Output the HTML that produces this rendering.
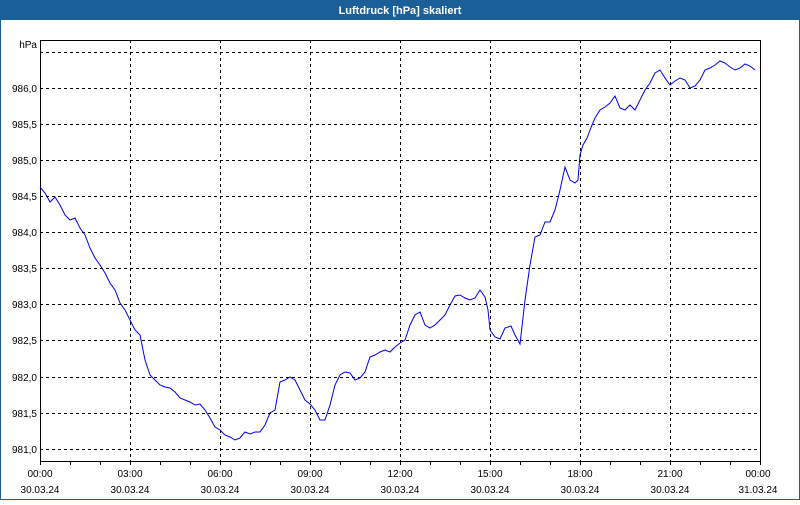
<!DOCTYPE html>
<html><head><style>
body{margin:0;width:800px;height:500px;overflow:hidden;background:#fff;font-family:"Liberation Sans",sans-serif}
</style></head><body>
<svg width="800" height="500" xmlns="http://www.w3.org/2000/svg" font-family="Liberation Sans, sans-serif" font-size="10">
<rect x="0" y="0" width="800" height="20" fill="#1b5f98"/>
<rect x="0.5" y="0.5" width="799" height="499" fill="none" stroke="#1b5f98" stroke-width="1"/>
<rect x="0" y="18" width="1" height="482" fill="#1b5f98"/>
<rect x="799" y="18" width="1" height="482" fill="#1b5f98"/>
<text x="400" y="14" fill="#fff" font-weight="bold" font-size="11" text-anchor="middle">Luftdruck [hPa] skaliert</text>
<g stroke="#000" stroke-width="1" stroke-dasharray="3,3" shape-rendering="crispEdges">
<line x1="40" x2="760" y1="52.5" y2="52.5"/><line x1="40" x2="760" y1="88.5" y2="88.5"/>
<line x1="40" x2="760" y1="124.5" y2="124.5"/><line x1="40" x2="760" y1="160.5" y2="160.5"/>
<line x1="40" x2="760" y1="196.5" y2="196.5"/><line x1="40" x2="760" y1="232.5" y2="232.5"/>
<line x1="40" x2="760" y1="268.5" y2="268.5"/><line x1="40" x2="760" y1="304.5" y2="304.5"/>
<line x1="40" x2="760" y1="340.5" y2="340.5"/><line x1="40" x2="760" y1="377.5" y2="377.5"/>
<line x1="40" x2="760" y1="413.5" y2="413.5"/><line x1="40" x2="760" y1="449.5" y2="449.5"/>
<line y1="40" y2="461" x1="130.5" x2="130.5"/><line y1="40" y2="461" x1="220.5" x2="220.5"/>
<line y1="40" y2="461" x1="310.5" x2="310.5"/><line y1="40" y2="461" x1="400.5" x2="400.5"/>
<line y1="40" y2="461" x1="490.5" x2="490.5"/><line y1="40" y2="461" x1="580.5" x2="580.5"/>
<line y1="40" y2="461" x1="670.5" x2="670.5"/>
</g>
<rect x="40.5" y="40.5" width="720" height="421" fill="none" stroke="#000" shape-rendering="crispEdges"/>
<g stroke="#000" shape-rendering="crispEdges">
<path d="M70.5 461v4M100.5 461v4M130.5 461v4M160.5 461v4M190.5 461v4M220.5 461v4M250.5 461v4M280.5 461v4M310.5 461v4M340.5 461v4M370.5 461v4M400.5 461v4M430.5 461v4M460.5 461v4M490.5 461v4M520.5 461v4M550.5 461v4M580.5 461v4M610.5 461v4M640.5 461v4M670.5 461v4M700.5 461v4M730.5 461v4M40.5 461v4M760.5 461v4"/>
</g>
<g fill="#000" text-anchor="end">
<text x="37" y="48">hPa</text>
<text x="37" y="92">986,0</text><text x="37" y="128">985,5</text><text x="37" y="164">985,0</text>
<text x="37" y="200">984,5</text><text x="37" y="236">984,0</text><text x="37" y="272">983,5</text>
<text x="37" y="308">983,0</text><text x="37" y="344">982,5</text><text x="37" y="381">982,0</text>
<text x="37" y="417">981,5</text><text x="37" y="453">981,0</text>
</g>
<g fill="#000" text-anchor="middle">
<text x="40" y="477">00:00</text><text x="40" y="493">30.03.24</text>
<text x="130" y="477">03:00</text><text x="130" y="493">30.03.24</text>
<text x="220" y="477">06:00</text><text x="220" y="493">30.03.24</text>
<text x="310" y="477">09:00</text><text x="310" y="493">30.03.24</text>
<text x="400" y="477">12:00</text><text x="400" y="493">30.03.24</text>
<text x="490" y="477">15:00</text><text x="490" y="493">30.03.24</text>
<text x="580" y="477">18:00</text><text x="580" y="493">30.03.24</text>
<text x="670" y="477">21:00</text><text x="670" y="493">30.03.24</text>
<text x="758" y="477">00:00</text><text x="758" y="493">31.03.24</text>
</g>
<polyline fill="none" stroke="#0000ee" stroke-width="1" points="40,187 45,193 50,202 55,197 60,205 65,215 70,220 75,218 80,228 85,235 90,248 95,258 100,265 105,273 110,283 115,290 120,303 125,310 130,320 135,330 140,335 145,360 150,375 155,380 160,385 165,387 170,388 175,392 180,398 185,400 190,402 195,405 200,404 205,410 210,418 215,427 220,430 225,435 230,437 235,440 240,438 245,432 250,434 255,432 260,432 265,425 270,413 275,410 280,382 285,380 290,377 295,380 300,390 305,400 310,404 315,410 320,420 325,420 330,405 335,385 340,375 345,372 350,373 355,380 360,378 365,372 370,357 375,355 380,352 385,350 390,352 395,347 400,343 405,340 410,325 415,315 420,312 425,325 430,328 435,325 440,320 445,315 450,305 455,296 460,295 465,298 470,300 475,298 480,290 485,297 488,310 490,330 495,337 500,339 505,328 511,326 515,335 520,344 525,300 530,265 535,237 540,235 545,222 550,222 555,210 560,190 565,167 570,180 575,183 578,180 580,155 583,145 587,138 590,130 595,118 600,110 605,107 610,103 615,96 620,108 625,110 630,105 635,110 640,100 645,90 650,83 655,73 660,70 665,78 670,85 675,81 680,78 685,80 690,88 695,86 700,80 705,70 710,68 715,65 720,61 725,63 730,67 735,70 740,68 745,64 750,66 755,70"/>
</svg>
</body></html>
